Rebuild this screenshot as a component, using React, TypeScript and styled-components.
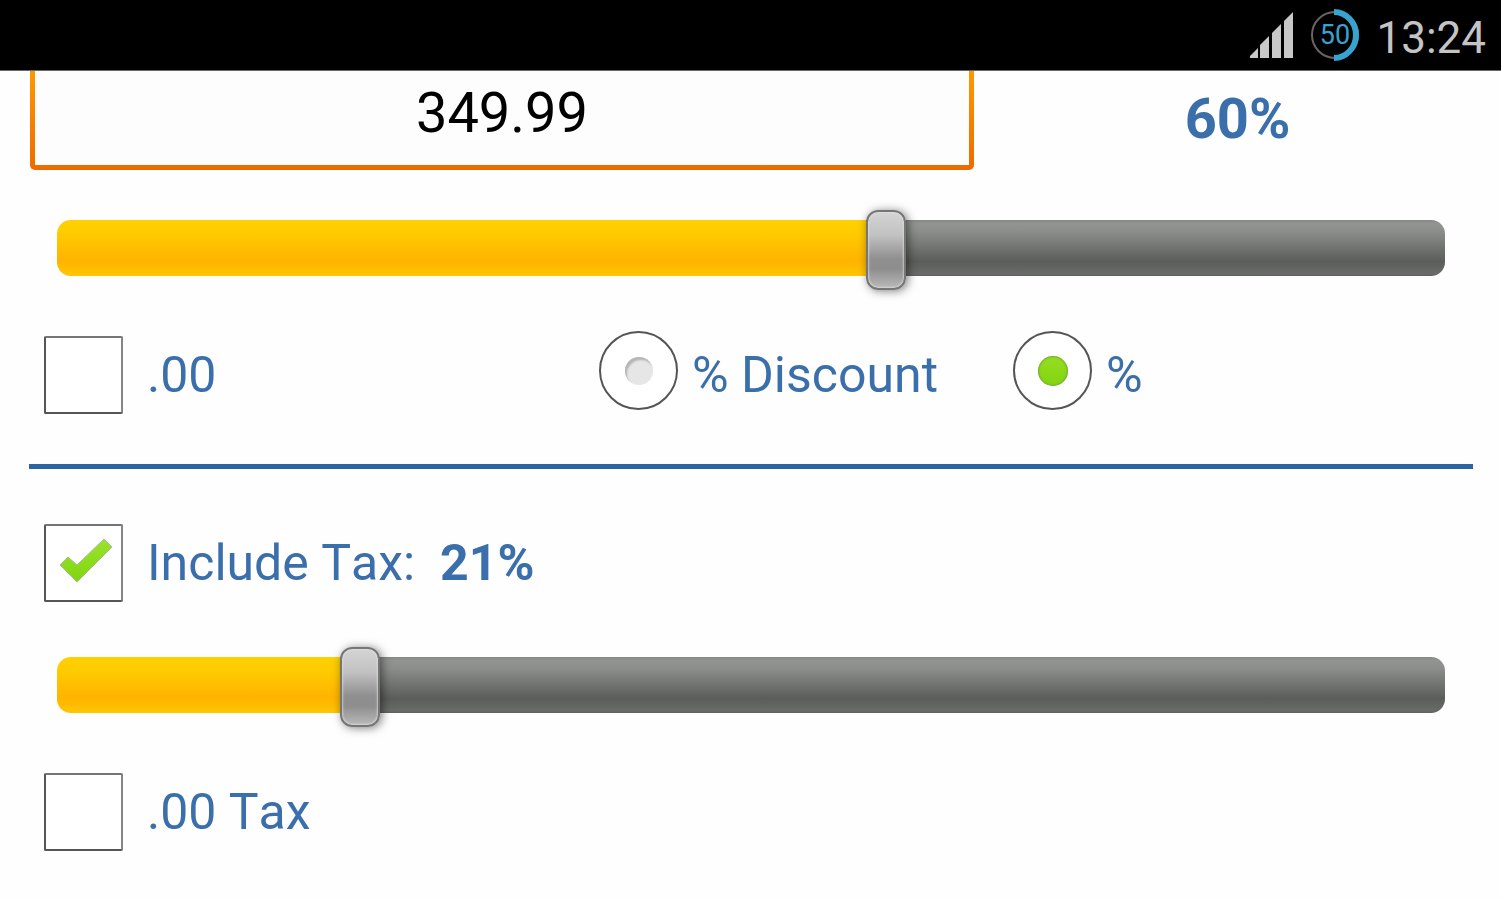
import React, { useState } from "react";
import styled, { createGlobalStyle } from "styled-components";

const GlobalStyle = createGlobalStyle`
  *, *::before, *::after { box-sizing: border-box; }
  body {
    margin: 0;
    background: #fefefe;
    color: #3b6fab;
    font-family: Roboto, "Liberation Sans", sans-serif;
    font-size: 50px;
    font-kerning: none;
  }
`;

const StatusBar = styled.header`
  display: flex;
  align-items: center;
  justify-content: flex-end;
  gap: 16px;
  height: 71px;
  padding: 0 15px 0 16px;
  background: #000;
  border-bottom: 1px solid #6b6767;
`;

const Clock = styled.time`
  padding-top: 6px;
  color: #c4c4c4;
  font-size: 44px;
  line-height: 56px;
`;

const PriceRow = styled.div`
  display: grid;
  grid-template-columns: 944fr 527fr;
  padding-left: 30px;
`;

const PriceInput = styled.input`
  width: 100%;
  height: 99px;
  padding: 0 0 10px;
  border: 5px solid transparent;
  border-top: 0;
  border-radius: 0 0 5px 5px;
  background:
    linear-gradient(#fdfdfd, #fdfdfd) padding-box,
    linear-gradient(#ff9800, #ee6a00) border-box;
  color: #000;
  font: 400 56px/64px Roboto, "Liberation Sans", sans-serif;
  text-align: center;
  outline: none;
`;

const PercentOutput = styled.output`
  align-self: center;
  padding-bottom: 4px;
  font-size: 56px;
  line-height: 64px;
  font-weight: 700;
  text-align: center;
`;

const SliderRow = styled.div`
  display: flex;
  padding: 0 56px 5px 57px;
`;

const Slider = styled.input<{ $fill: number }>`
  appearance: none;
  width: 100%;
  height: 76px;
  margin: 0;
  background: transparent;
  outline: none;

  &::-webkit-slider-runnable-track {
    height: 56px;
    border-radius: 14px;
    background:
      linear-gradient(#ffd000 0%, #ffcc00 22%, #ffb500 70%, #ffb800 80%, #ffc600 100%)
        0 0 / ${(p) => p.$fill}% 100% no-repeat,
      linear-gradient(#868886 0%, #929492 6%, #8b8e8b 20%, #5b5d5a 74%, #696b68 96%, #5f605f 100%);
  }

  &::-webkit-slider-thumb {
    appearance: none;
    width: 40px;
    height: 80px;
    margin-top: -10px;
    border: 2px solid #757675;
    border-radius: 12px;
    background: linear-gradient(#d4d4d4 0%, #c2c2c2 30%, #8f8f8f 62%, #8e8e8e 75%, #b9b9b9 100%);
    box-shadow:
      inset 0 0 2px 1px rgba(225, 225, 225, 0.7),
      2px 1px 10px rgba(0, 0, 0, 0.5);
  }
`;

const OptionsRow = styled.div`
  display: grid;
  grid-template-columns: 555fr 414fr 460fr;
  align-items: start;
  padding: 0 28px 0 44px;
`;

const TaxRow = styled.div`
  display: flex;
  padding: 0 28px 0 44px;
`;

const Option = styled.label<{ $gap: number }>`
  display: flex;
  align-items: flex-start;
  gap: ${(p) => p.$gap}px;
  line-height: 88px;
  white-space: pre;
`;

const CheckSlot = styled.span`
  display: grid;
  flex: none;
  margin-top: 5px;

  > * {
    grid-area: 1 / 1;
  }
`;

const CheckBox = styled.input`
  appearance: none;
  width: 79px;
  height: 78px;
  margin: 0;
  border: 2px solid #555;
  border-right-color: #858585;
  border-top-color: #757575;
  border-radius: 2px;
  background: #fff;
`;

const Tick = styled.svg`
  width: 79px;
  height: 78px;
  pointer-events: none;
`;

const Radio = styled.input`
  appearance: none;
  display: grid;
  place-items: center;
  flex: none;
  width: 79px;
  height: 79px;
  margin: 0;
  border: 2px solid #555;
  border-radius: 50%;
  background: #fff;

  &::before {
    content: "";
    width: 28px;
    height: 28px;
    border-radius: 50%;
    background: #e6e6e6;
    box-shadow: inset 2px 3px 2px #b5b5b5;
  }

  &:checked::before {
    width: 30px;
    height: 30px;
    background: linear-gradient(#95dd22, #82d50f);
    box-shadow: inset 0 0 2px 1px #7aa83c;
  }
`;

const Form = styled.main`
  display: flex;
  flex-direction: column;
`;

const Section = styled.section`
  display: flex;
  flex-direction: column;
  gap: 40px;
  padding-bottom: 45px;
`;

const TaxSection = styled(Section)`
  padding-top: 50px;
`;

const Divider = styled.hr`
  width: auto;
  height: 5px;
  margin: 0 28px 0 29px;
  border: 0;
  background: #2a65a0;
`;

function SignalIcon() {
  return (
    <svg width="44" height="46" viewBox="0 0 44 46" role="img" aria-label="Signal strength">
      <g fill="#c8c8c8">
        <path d="M0 46 V44 L8 36 V46Z" />
        <path d="M10 46 V33 L19 24 V46Z" />
        <path d="M22 46 V21 L31 12 V46Z" />
        <path d="M34 46 V9 L43 0 V46Z" />
      </g>
    </svg>
  );
}

function BatteryIcon({ level }: { level: number }) {
  return (
    <svg width="50" height="54" viewBox="0 0 50 54" role="img" aria-label="Battery">
      <ellipse cx="25" cy="27" rx="23" ry="23" fill="none" stroke="#6a6562" strokeWidth="2" />
      <path d="M24 4 A22 23 0 0 1 24 50" fill="none" stroke="#36a3d0" strokeWidth="6" />
      <text x="25" y="36" fill="#36a3d0" fontSize="27" textAnchor="middle">
        {level}
      </text>
    </svg>
  );
}

interface CheckProps {
  label: React.ReactNode;
  initial?: boolean;
}

function CheckOption({ label, initial = false }: CheckProps) {
  const [checked, setChecked] = useState(initial);
  return (
    <Option $gap={24}>
      <CheckSlot>
        <CheckBox type="checkbox" checked={checked} onChange={(e) => setChecked(e.target.checked)} />
        {checked && (
          <Tick viewBox="0 0 79 78" aria-hidden="true">
            <defs>
              <linearGradient id="tick" x1="0" y1="0" x2="0" y2="1">
                <stop offset="0" stopColor="#9ae32c" />
                <stop offset="1" stopColor="#80d60d" />
              </linearGradient>
            </defs>
            <path
              d="M16 41 L24 33 L33 41 L60 15 L68 23 L33 58Z"
              fill="url(#tick)"
              stroke="#a9b99a"
              strokeWidth="1"
              strokeLinejoin="round"
            />
          </Tick>
        )}
      </CheckSlot>
      <span>{label}</span>
    </Option>
  );
}

interface SliderProps {
  label: string;
  value: number;
  onChange: (value: number) => void;
}

function PercentSlider({ label, value, onChange }: SliderProps) {
  return (
    <SliderRow>
      <Slider
        type="range"
        min={0}
        max={100}
        aria-label={label}
        value={value}
        $fill={value}
        onChange={(e) => onChange(Number(e.target.value))}
      />
    </SliderRow>
  );
}

export default function App() {
  const [price, setPrice] = useState("349.99");
  const [discount, setDiscount] = useState(60);
  const [tax, setTax] = useState(21);
  const [mode, setMode] = useState("percent");

  return (
    <>
      <GlobalStyle />
      <StatusBar>
        <SignalIcon />
        <BatteryIcon level={50} />
        <Clock>13:24</Clock>
      </StatusBar>
      <Form>
        <Section>
          <PriceRow>
            <PriceInput aria-label="Price" value={price} onChange={(e) => setPrice(e.target.value)} />
            <PercentOutput>{discount}%</PercentOutput>
          </PriceRow>
          <PercentSlider label="Discount" value={discount} onChange={setDiscount} />
          <OptionsRow>
            <CheckOption label=".00" />
            <Option $gap={14}>
              <Radio type="radio" name="mode" checked={mode === "discount"} onChange={() => setMode("discount")} />
              <span>% Discount</span>
            </Option>
            <Option $gap={14}>
              <Radio type="radio" name="mode" checked={mode === "percent"} onChange={() => setMode("percent")} />
              <span>%</span>
            </Option>
          </OptionsRow>
        </Section>
        <Divider />
        <TaxSection>
          <TaxRow>
            <CheckOption
              initial
              label={
                <>
                  Include Tax: <b> {tax}%</b>
                </>
              }
            />
          </TaxRow>
          <PercentSlider label="Tax" value={tax} onChange={setTax} />
          <TaxRow>
            <CheckOption label=".00 Tax" />
          </TaxRow>
        </TaxSection>
      </Form>
    </>
  );
}
